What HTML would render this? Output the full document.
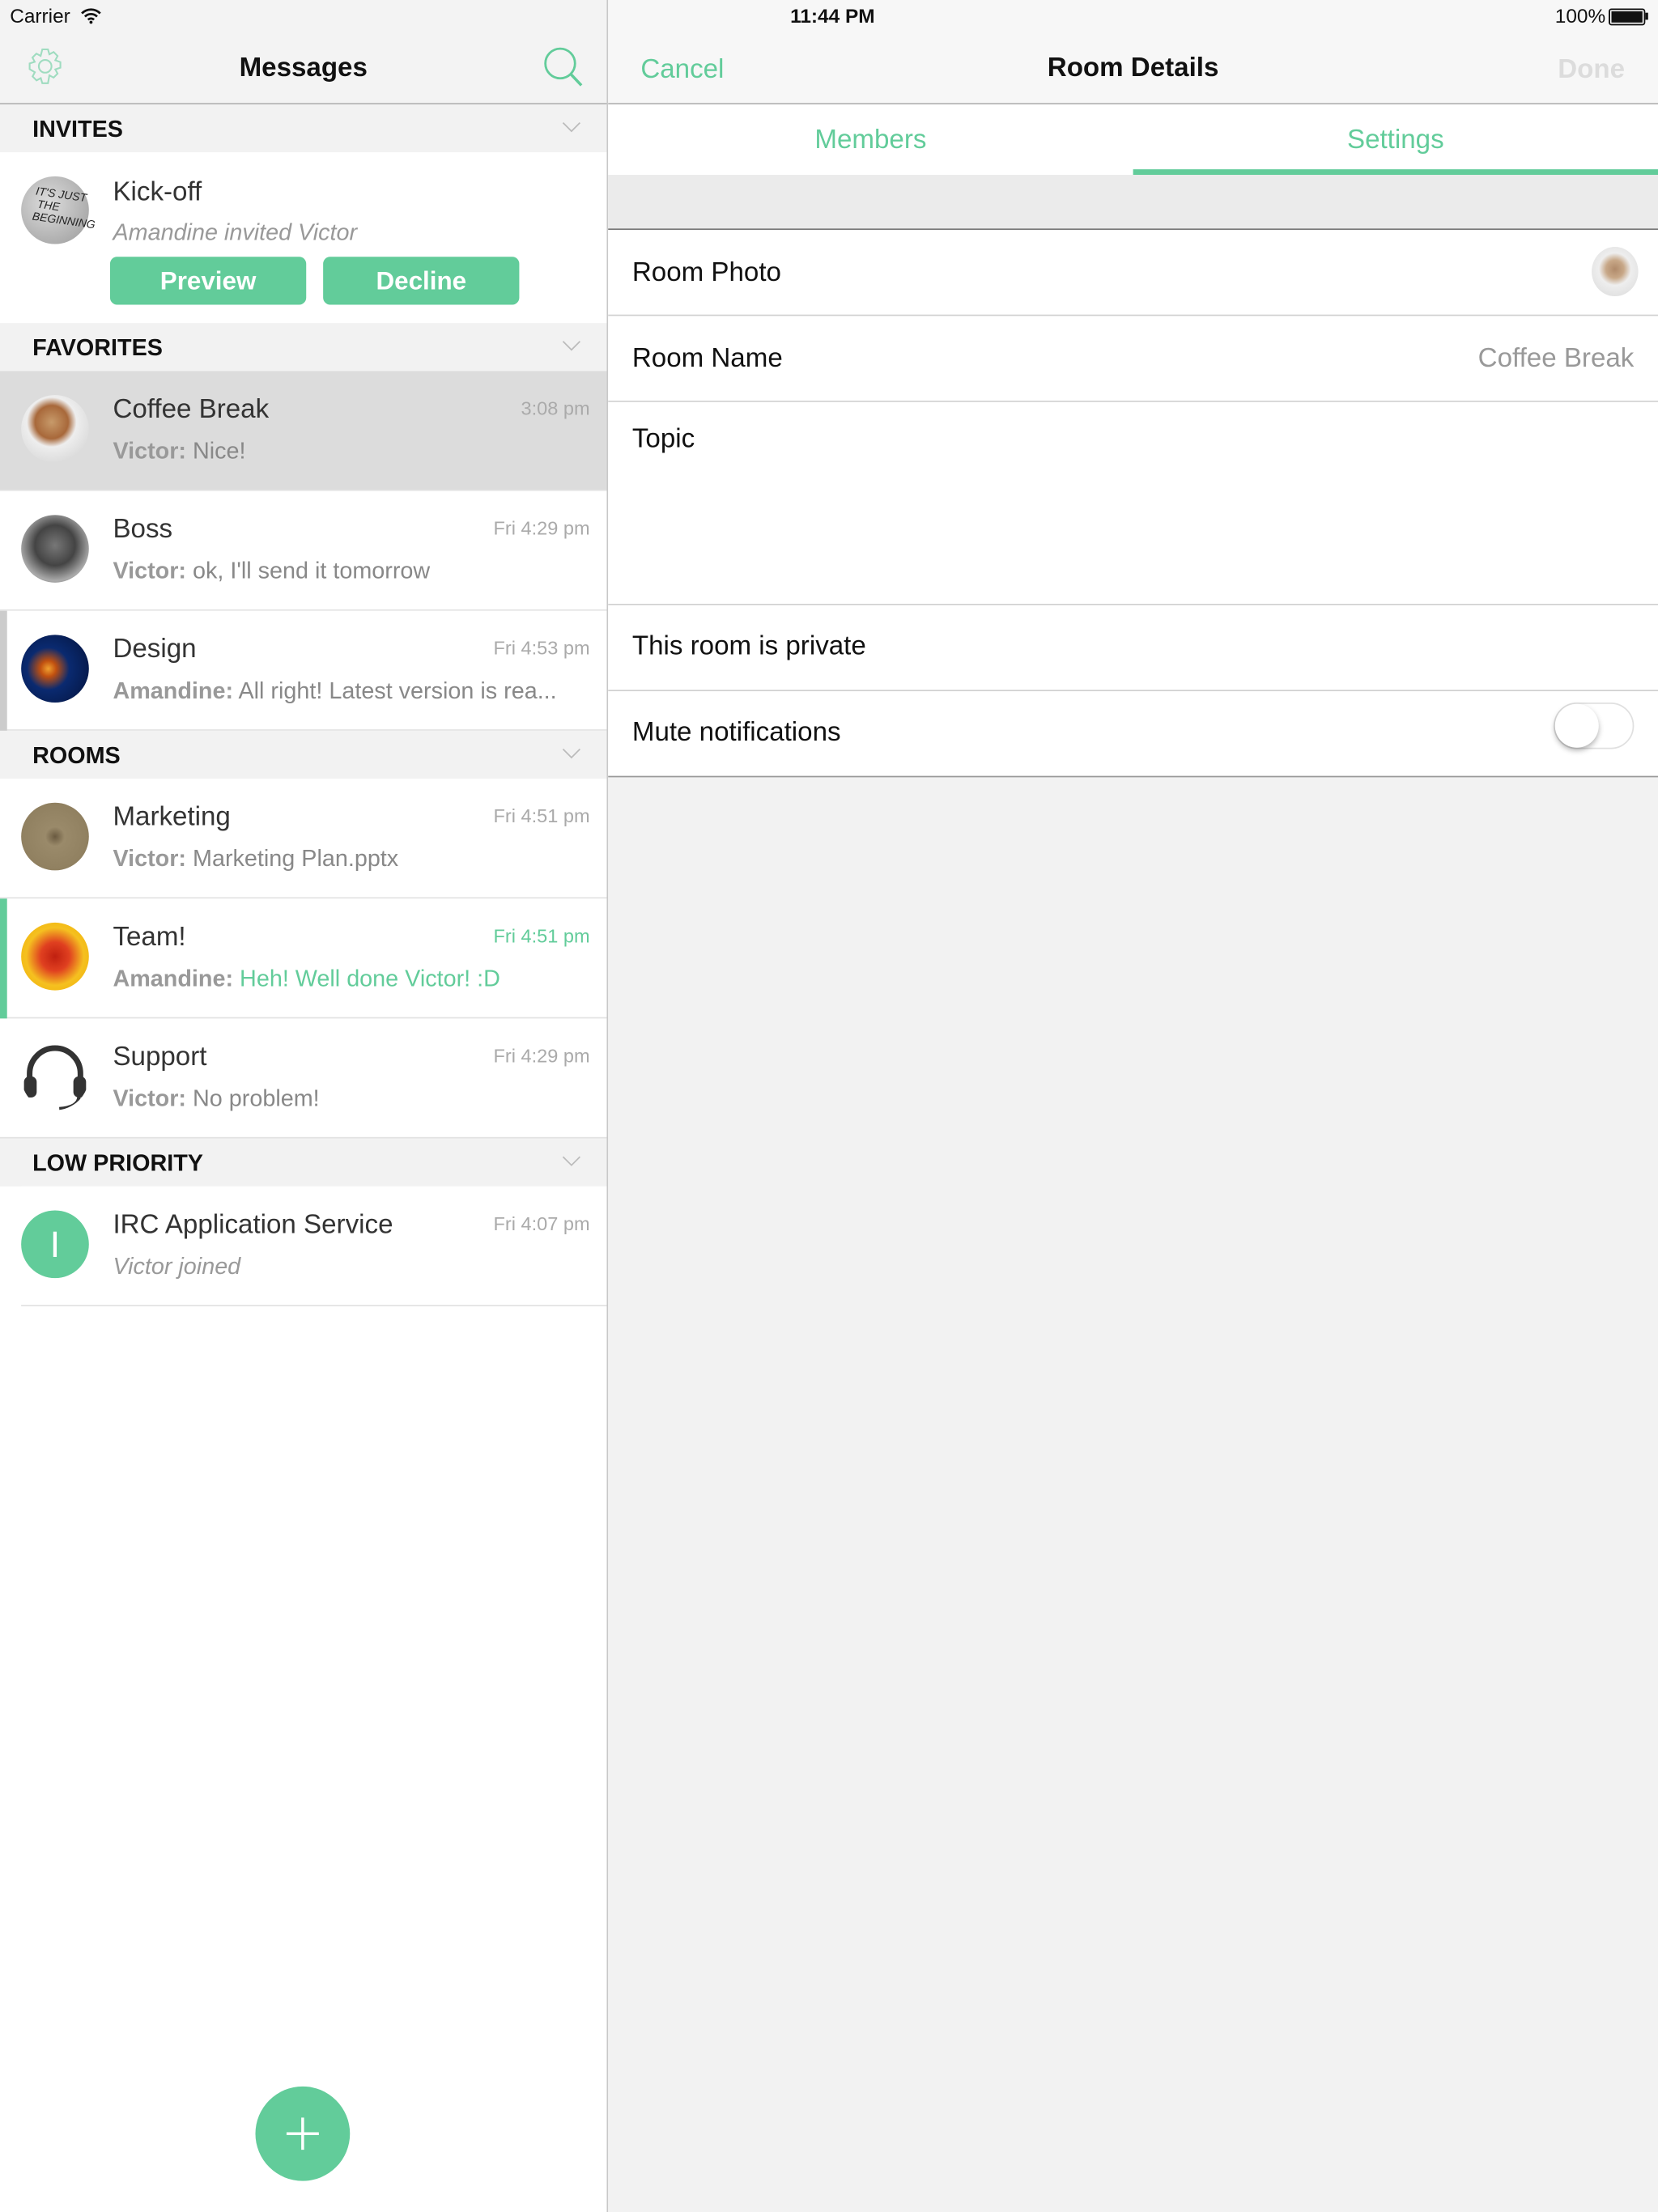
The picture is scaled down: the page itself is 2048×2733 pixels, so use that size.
<!DOCTYPE html>
<html><head><meta charset="utf-8"><style>
html,body{margin:0;padding:0;width:2048px;height:2732px;overflow:hidden;background:#fff}
#w{position:absolute;left:0;top:0;width:1175px;height:1568px;transform:scale(1.74298);transform-origin:0 0;font-family:"Liberation Sans",sans-serif;color:#222}
.a{position:absolute}
.sec{position:absolute;left:0;width:430px;height:34px;background:#f2f2f2;font-size:16.5px;font-weight:bold;color:#111}
.sec span{position:absolute;left:23px;top:9px}
.sec svg{position:absolute;right:18px;top:12px}
.row{position:absolute;left:0;width:430px;height:85px;background:#fff;border-bottom:1px solid #e2e2e2;box-sizing:border-box}
.av{position:absolute;left:15px;top:17px;width:48px;height:48px;border-radius:50%}
.t{position:absolute;left:80px;top:17px;font-size:19px;color:#333}
.s{position:absolute;left:80px;top:48px;font-size:16.5px;color:#888;white-space:nowrap}
.s b{font-weight:bold;color:#999}
.tm{position:absolute;right:12px;top:19px;font-size:13.5px;color:#aaa}
.cell{position:absolute;left:431px;width:744px;background:#fff;border-bottom:1px solid #d0d0d0;font-size:19px;color:#111}
.cell span{position:absolute;left:17px}
</style></head><body><div id="w">
<div class="a" style="left:0;top:0;width:430px;height:73px;background:#f3f3f3;border-bottom:1px solid #b5b5b5"></div>
<div class="a" style="left:7px;top:3px;font-size:14px;color:#111">Carrier</div>
<svg class="a" style="left:57px;top:5px" width="15" height="12" viewBox="0 0 15 12"><path d="M1 4.5a9 9 0 0 1 13 0M3.2 6.8a6 6 0 0 1 8.6 0M5.4 9a3 3 0 0 1 4.2 0" stroke="#111" stroke-width="1.6" fill="none"/><circle cx="7.5" cy="10.8" r="1.1" fill="#111"/></svg>
<svg class="a" style="left:18px;top:33px" width="28" height="28" viewBox="0 0 28 28"><path d="M12 2h4l1 3.5 3-1.6 2.8 2.8-1.6 3 3.6 1.3v4l-3.6 1.2 1.6 3-2.8 2.8-3-1.6L16 26h-4l-1.1-3.6-3 1.6-2.8-2.8 1.6-3L3 16v-4l3.6-1.2-1.6-3 2.8-2.8 3 1.6z" fill="none" stroke="#9fdcc0" stroke-width="1.2"/><circle cx="14" cy="14" r="4.5" fill="none" stroke="#9fdcc0" stroke-width="1.2"/></svg>
<div class="a" style="left:0;width:430px;top:38px;text-align:center;font-size:19px;font-weight:bold;color:#111">Messages</div>
<svg class="a" style="left:385px;top:33px" width="29" height="29" viewBox="0 0 29 29"><circle cx="12" cy="12" r="10.5" fill="none" stroke="#62cc9a" stroke-width="1.6"/><path d="M19.5 19.5l7.5 8" stroke="#62cc9a" stroke-width="2"/></svg>

<div class="sec" style="top:74px"><span>INVITES</span><svg width="14" height="8"><path d="M1 1l6 6 6-6" stroke="#bbb" fill="none"/></svg></div>
<div class="a" style="left:0;top:108px;width:430px;height:121px;background:#fff"></div>
<div class="av" style="top:125px;background:radial-gradient(circle at 40% 40%,#ddd,#999);"></div>
<div class="a" style="left:24px;top:134px;font-size:8px;color:#222;transform:rotate(8deg);font-style:italic">IT'S JUST<br>&nbsp;THE<br>BEGINNING</div>
<div class="t" style="top:126px">Kick-off</div>
<div class="s" style="top:156px;font-style:italic;color:#999">Amandine invited Victor</div>
<div class="a" style="left:78px;top:182px;width:139px;height:34px;border-radius:5px;background:#62cc9a;color:#fff;font-weight:bold;font-size:18px;text-align:center;line-height:34px">Preview</div>
<div class="a" style="left:229px;top:182px;width:139px;height:34px;border-radius:5px;background:#62cc9a;color:#fff;font-weight:bold;font-size:18px;text-align:center;line-height:34px">Decline</div>

<div class="sec" style="top:229px"><span>FAVORITES</span><svg width="14" height="8"><path d="M1 1l6 6 6-6" stroke="#bbb" fill="none"/></svg></div>
<div class="row" style="top:263px;background:#dcdcdc"><div class="av" style="background:radial-gradient(circle at 45% 40%,#c79a6a 0,#a8683a 30%,#eee 45%,#ccc 100%)"></div><div class="t">Coffee Break</div><div class="s"><b>Victor:</b> Nice!</div><div class="tm">3:08 pm</div></div>
<div class="row" style="top:348px"><div class="av" style="background:radial-gradient(circle at 50% 45%,#777 0,#444 40%,#aaa 70%,#666 100%)"></div><div class="t">Boss</div><div class="s"><b>Victor:</b> ok, I'll send it tomorrow</div><div class="tm">Fri 4:29 pm</div></div>
<div class="row" style="top:433px"><div class="a" style="left:0;top:0;width:5px;height:85px;background:#ccc"></div><div class="av" style="background:radial-gradient(circle at 40% 50%,#f0a030 0,#c05010 15%,#0a2a70 40%,#04123a 100%)"></div><div class="t">Design</div><div class="s"><b>Amandine:</b> All right! Latest version is rea...</div><div class="tm">Fri 4:53 pm</div></div>

<div class="sec" style="top:518px"><span>ROOMS</span><svg width="14" height="8"><path d="M1 1l6 6 6-6" stroke="#bbb" fill="none"/></svg></div>
<div class="row" style="top:552px"><div class="av" style="background:radial-gradient(circle,#6a5a40 0,#9a8a6a 20%,#8a7a5a 100%)"></div><div class="t">Marketing</div><div class="s"><b>Victor:</b> Marketing Plan.pptx</div><div class="tm">Fri 4:51 pm</div></div>
<div class="row" style="top:637px"><div class="a" style="left:0;top:0;width:5px;height:85px;background:#62cc9a"></div><div class="av" style="background:radial-gradient(circle,#c02010 0,#e04020 30%,#f5c020 60%,#f0b000 100%)"></div><div class="t">Team!</div><div class="s"><b>Amandine:</b> <span style="color:#62cc9a">Heh! Well done Victor! :D</span></div><div class="tm" style="color:#62cc9a">Fri 4:51 pm</div></div>
<div class="row" style="top:722px"><svg class="av" width="48" height="48" viewBox="0 0 48 48"><path d="M6 28v-6a18 18 0 0 1 36 0v6" stroke="#333" stroke-width="4" fill="none"/><rect x="2" y="24" width="9" height="15" rx="4" fill="#333"/><rect x="37" y="24" width="9" height="15" rx="4" fill="#333"/><path d="M41 38q0 8-14 9" stroke="#333" stroke-width="2.5" fill="none"/></svg><div class="t">Support</div><div class="s"><b>Victor:</b> No problem!</div><div class="tm">Fri 4:29 pm</div></div>

<div class="sec" style="top:807px"><span>LOW PRIORITY</span><svg width="14" height="8"><path d="M1 1l6 6 6-6" stroke="#bbb" fill="none"/></svg></div>
<div class="row" style="top:841px;left:15px;width:415px"><div class="av" style="left:0;background:#62cc9a;color:#fff;font-size:26px;text-align:center;line-height:48px">I</div><div class="t" style="left:65px">IRC Application Service</div><div class="s" style="left:65px;font-style:italic;color:#999">Victor joined</div><div class="tm">Fri 4:07 pm</div></div>

<div class="a" style="left:181px;top:1479px;width:67px;height:67px;border-radius:50%;background:#62cc9a"></div>
<svg class="a" style="left:203px;top:1501px" width="23" height="23"><path d="M11.5 0v23M0 11.5h23" stroke="#fff" stroke-width="2"/></svg>

<div class="a" style="left:430px;top:0;width:1px;height:1568px;background:#c8c8c8"></div>

<div class="a" style="left:431px;top:0;width:744px;height:1568px;background:#f2f2f2"></div>
<div class="a" style="left:431px;top:0;width:744px;height:73px;background:#f7f7f7;border-bottom:1px solid #b5b5b5"></div>
<div class="a" style="left:431px;width:318px;top:3px;text-align:center;font-size:14px;font-weight:bold;color:#111">11:44 PM</div>
<div class="a" style="left:1102px;top:3px;font-size:14px;color:#111">100%</div>
<div class="a" style="left:1140px;top:6px;width:24px;height:10px;border:1px solid #111;border-radius:2px;background:#111;box-shadow:inset 0 0 0 1px #fff"></div>
<div class="a" style="left:1166px;top:9px;width:2px;height:5px;background:#111"></div>
<div class="a" style="left:454px;top:39px;font-size:19px;color:#62cc9a">Cancel</div>
<div class="a" style="left:431px;width:744px;top:38px;text-align:center;font-size:19px;font-weight:bold;color:#111">Room Details</div>
<div class="a" style="left:1104px;top:39px;font-size:19px;font-weight:bold;color:#dcdcdc">Done</div>

<div class="a" style="left:431px;top:74px;width:744px;height:50px;background:#fff"></div>
<div class="a" style="left:431px;width:372px;top:89px;text-align:center;font-size:19px;color:#62cc9a">Members</div>
<div class="a" style="left:803px;width:372px;top:89px;text-align:center;font-size:19px;color:#62cc9a">Settings</div>
<div class="a" style="left:803px;top:120px;width:372px;height:4px;background:#62cc9a"></div>
<div class="a" style="left:431px;top:124px;width:744px;height:38px;background:#ebebeb;border-bottom:1px solid #777"></div>

<div class="cell" style="top:163px;height:60px"><span style="top:20px">Room Photo</span><div class="a" style="left:697px;top:12px;width:33px;height:35px;border-radius:50%;background:radial-gradient(circle at 50% 45%,#b08a6a 0,#c8a888 25%,#eee 45%,#d8d8d8 100%)"></div></div>
<div class="cell" style="top:224px;height:60px"><span style="top:20px">Room Name</span><span style="left:auto;right:17px;top:20px;color:#999">Coffee Break</span></div>
<div class="cell" style="top:285px;height:143px"><span style="top:16px">Topic</span></div>
<div class="cell" style="top:429px;height:60px"><span style="top:19px">This room is private</span></div>
<div class="cell" style="top:490px;height:60px;border-bottom-color:#999"><span style="top:19px">Mute notifications</span><div class="a" style="left:670px;top:8px;width:57px;height:33px;border-radius:17px;border:1.5px solid #e0e0e0;box-sizing:border-box"></div><div class="a" style="left:671px;top:9px;width:31px;height:31px;border-radius:50%;background:#fff;box-shadow:0 2px 4px rgba(0,0,0,.3)"></div></div>
</div></body></html>
